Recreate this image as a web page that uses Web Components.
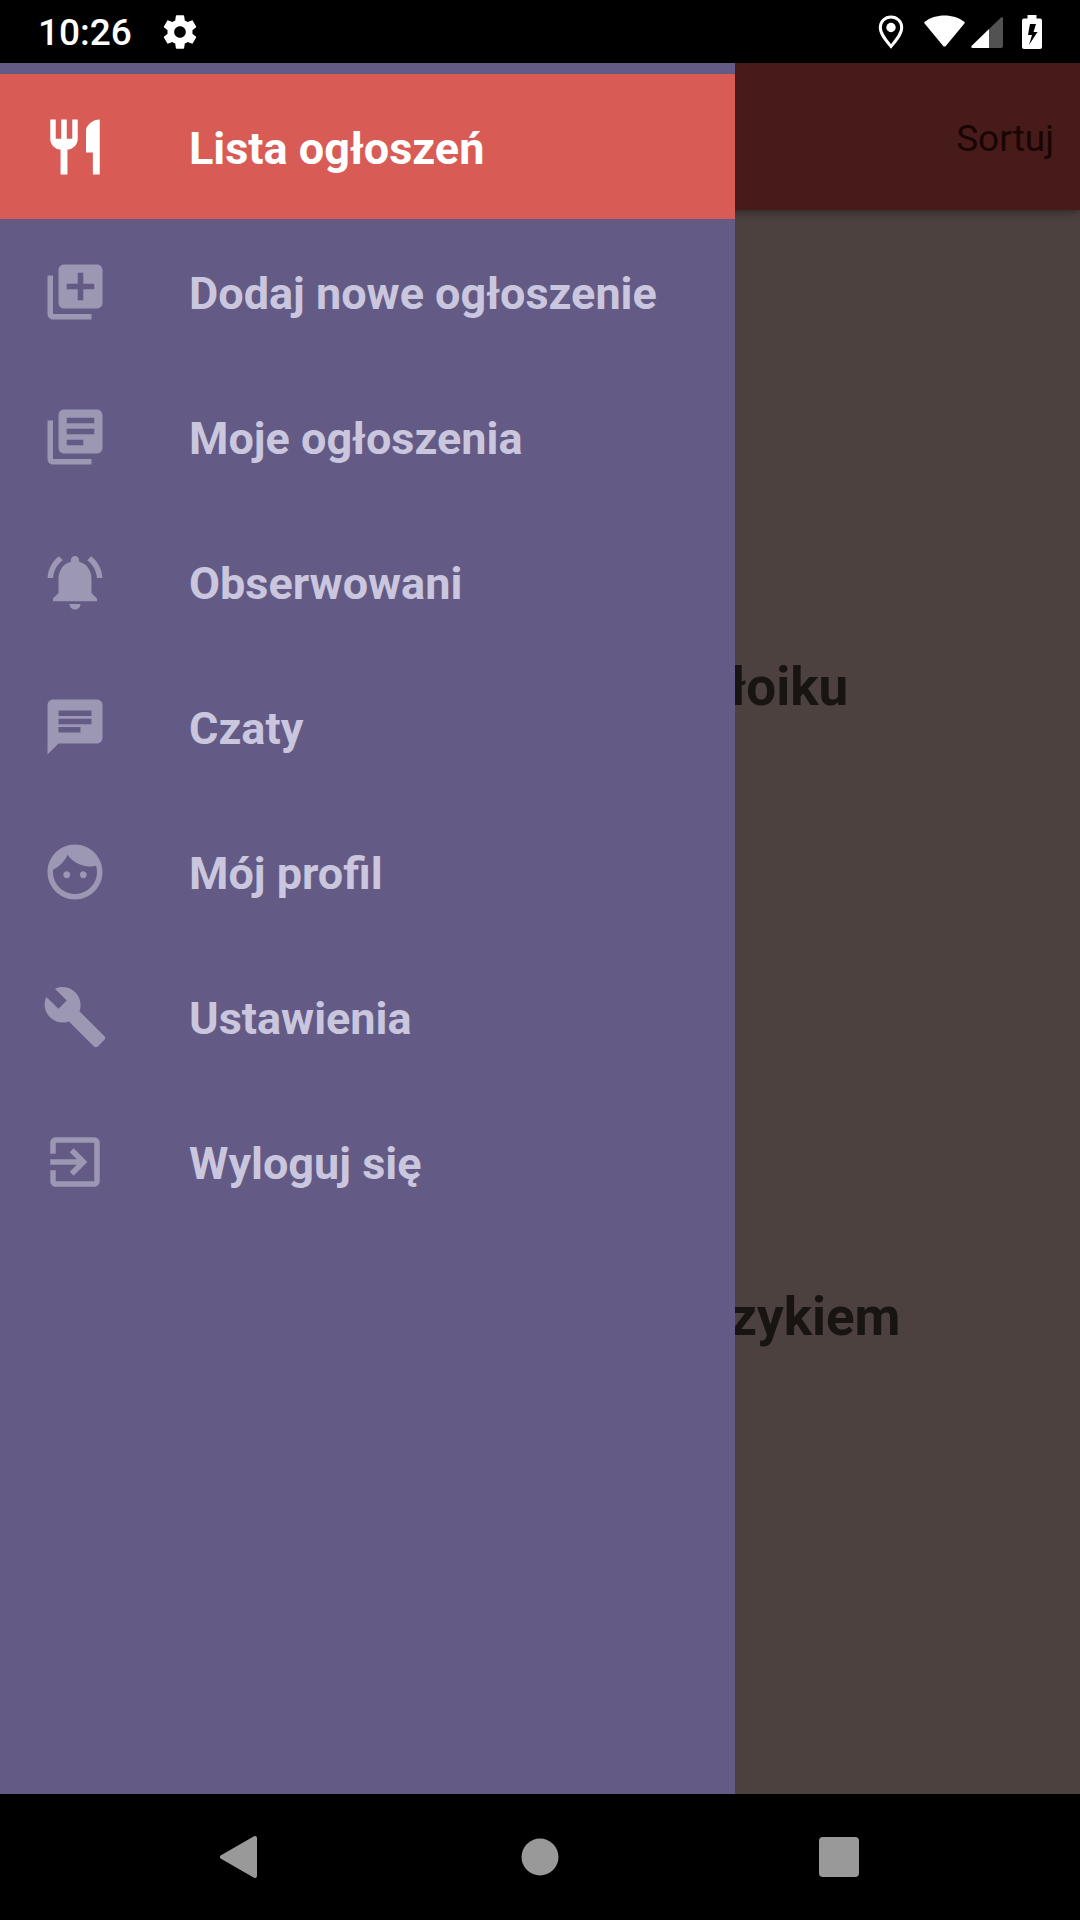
<!DOCTYPE html>
<html lang="pl">
<head>
<meta charset="utf-8">
<meta name="viewport" content="width=device-width, initial-scale=1">
<title>Lista ogłoszeń</title>
<style>
  html, body { height: 100%; margin: 0; }
  body { font-family: Roboto, "Liberation Sans", sans-serif; background: #000; }
</style>
</head>
<body>
<app-screen>
  <status-bar slot="status">10:26</status-bar>
  <listing-page slot="page">
    <listing-title>łoiku</listing-title>
    <listing-title>zykiem</listing-title>
  </listing-page>
  <nav-drawer slot="drawer">
    <drawer-item icon="restaurant" active>Lista ogłoszeń</drawer-item>
    <drawer-item icon="add">Dodaj nowe ogłoszenie</drawer-item>
    <drawer-item icon="library">Moje ogłoszenia</drawer-item>
    <drawer-item icon="bell">Obserwowani</drawer-item>
    <drawer-item icon="chat">Czaty</drawer-item>
    <drawer-item icon="face">Mój profil</drawer-item>
    <drawer-item icon="build">Ustawienia</drawer-item>
    <drawer-item icon="exit">Wyloguj się</drawer-item>
  </nav-drawer>
  <system-nav slot="nav"></system-nav>
</app-screen>
<script>
const ICONS = {
  restaurant: 'M11 9H9V2H7v7H5V2H3v7c0 2.12 1.66 3.84 3.75 3.97V22h2.5v-9.03C11.34 12.84 13 11.12 13 9V2h-2v7zm5-3v8h2.5v8H21V2c-2.76 0-5 2.24-5 4z',
  add: 'M4 6H2v14c0 1.1.9 2 2 2h14v-2H4V6zm16-4H8c-1.1 0-2 .9-2 2v12c0 1.1.9 2 2 2h12c1.1 0 2-.9 2-2V4c0-1.1-.9-2-2-2zm-1 9h-4v4h-2v-4H9V9h4V5h2v4h4v2z',
  library: 'M4 6H2v14c0 1.1.9 2 2 2h14v-2H4V6zm16-4H8c-1.1 0-2 .9-2 2v12c0 1.1.9 2 2 2h12c1.1 0 2-.9 2-2V4c0-1.1-.9-2-2-2zm-1 9H9V9h10v2zm-4 4H9v-2h6v2zm4-8H9V5h10v2z',
  bell: 'M7.58 4.08L6.15 2.65C3.75 4.48 2.17 7.3 2.03 10.5h2c.15-2.65 1.51-4.97 3.55-6.42zm12.39 6.42h2c-.15-3.2-1.73-6.02-4.12-7.85l-1.42 1.43c2.02 1.45 3.39 3.77 3.54 6.42zM18 11c0-3.07-1.64-5.64-4.5-6.32V4c0-.83-.67-1.5-1.5-1.5s-1.5.67-1.5 1.5v.68C7.63 5.36 6 7.92 6 11v5l-2 2v1h16v-1l-2-2v-5zm-6 11c.14 0 .27-.01.4-.04.65-.14 1.18-.58 1.44-1.18.1-.24.15-.5.15-.78h-4c.01 1.1.9 2 2.01 2z',
  chat: 'M20 2H4c-1.1 0-1.99.9-1.99 2L2 22l4-4h14c1.1 0 2-.9 2-2V4c0-1.1-.9-2-2-2zM6 9h12v2H6V9zm8 5H6v-2h8v2zm4-6H6V6h12v2z',
  face: 'M9 11.75c-.69 0-1.25.56-1.25 1.25s.56 1.25 1.25 1.25 1.25-.56 1.25-1.25-.56-1.25-1.25-1.25zm6 0c-.69 0-1.25.56-1.25 1.25s.56 1.25 1.25 1.25 1.25-.56 1.25-1.25-.56-1.25-1.25-1.25zM12 2C6.48 2 2 6.48 2 12s4.48 10 10 10 10-4.48 10-10S17.52 2 12 2zm0 18c-4.41 0-8-3.59-8-8 0-.29.02-.58.05-.86 2.36-1.05 4.23-2.98 5.21-5.37C11.07 8.33 14.05 10 17.42 10c.78 0 1.53-.09 2.25-.26.21.71.33 1.47.33 2.26 0 4.41-3.59 8-8 8z',
  build: 'M22.7 19l-9.1-9.1c.9-2.3.4-5-1.5-6.9-2-2-5-2.4-7.4-1.3L9 6 6 9 1.6 4.7C.4 7.1.9 10.1 2.9 12.1c1.9 1.9 4.6 2.4 6.9 1.5l9.1 9.1c.4.4 1 .4 1.4 0l2.3-2.3c.5-.4.5-1.1.1-1.4z',
  exit: 'M10.09 15.59L11.5 17l5-5-5-5-1.41 1.41L12.67 11H3v2h9.67l-2.58 2.59zM19 3H5c-1.11 0-2 .9-2 2v4h2V5h14v14H5v-4H3v4c0 1.1.89 2 2 2h14c1.1 0 2-.9 2-2V5c0-1.1-.9-2-2-2z'
};
// Registers an element whose shadow root holds the given markup.
function define(name, markup) {
  customElements.define(name, class extends HTMLElement {
    constructor() {
      super();
      this.attachShadow({ mode: 'open' }).innerHTML = typeof markup === 'function' ? markup(this) : markup;
    }
  });
}

define('app-screen', `
  <style>
    :host { display: flex; flex-direction: column; min-height: 100vh; }
    main { flex: 1; display: grid; grid-template-columns: minmax(0, 735px) 1fr; overflow: hidden; }
    ::slotted([slot=page]) { grid-area: 1 / 1 / 2 / 3; }
    ::slotted([slot=drawer]) { grid-area: 1 / 1 / 2 / 2; z-index: 1; }
  </style>
  <slot name="status"></slot>
  <main><slot name="page"></slot><slot name="drawer"></slot></main>
  <slot name="nav"></slot>`);

define('status-bar', `
  <style>
    :host { display: flex; align-items: center; justify-content: space-between; height: 63px;
      padding: 0 38px; background: #000; color: #fff; font-size: 37px; line-height: 44px; font-weight: 500; }
    div { display: flex; align-items: center; }
    .left { gap: 28px; }
    time { padding-top: 3px; }
    svg { display: block; fill: #fff; }
    .pin { margin-right: 20px; } .wifi { margin-right: 6px; } .signal { margin-right: 19px; }
  </style>
  <div class="left"><time><slot></slot></time>
    <svg width="40" height="40" viewBox="0 0 24 24"><path d="M19.43 12.98c.04-.32.07-.64.07-.98s-.03-.66-.07-.98l2.11-1.65c.19-.15.24-.42.12-.64l-2-3.46c-.12-.22-.39-.3-.61-.22l-2.49 1c-.52-.4-1.08-.73-1.69-.98l-.38-2.65C14.46 2.18 14.25 2 14 2h-4c-.25 0-.46.18-.49.42l-.38 2.65c-.61.25-1.17.59-1.69.98l-2.49-1c-.23-.09-.49 0-.61.22l-2 3.46c-.13.22-.07.49.12.64l2.11 1.65c-.04.32-.07.65-.07.98s.03.66.07.98l-2.11 1.65c-.19.15-.24.42-.12.64l2 3.46c.12.22.39.3.61.22l2.49-1c.52.4 1.08.73 1.69.98l.38 2.65c.03.24.24.42.49.42h4c.25 0 .46-.18.49-.42l.38-2.65c.61-.25 1.17-.59 1.69-.98l2.49 1c.23.09.49 0 .61-.22l2-3.46c.12-.22.07-.49-.12-.64l-2.11-1.65zM12 15.5c-1.93 0-3.5-1.57-3.5-3.5s1.57-3.5 3.5-3.5 3.5 1.57 3.5 3.5-1.57 3.5-3.5 3.5z"/></svg>
  </div>
  <div class="right">
    <svg class="pin" width="26" height="34" viewBox="0 0 26 34"><path d="M13 2C7 2 2.300 6.500 2.300 12.500 2.300 19 8 25.500 13 31.500 18 25.500 23.700 19 23.700 12.500 23.700 6.500 19 2 13 2z" fill="none" stroke="#fff" stroke-width="3"/><circle cx="13" cy="12.500" r="4.700"/></svg>
    <svg class="wifi" width="41" height="34" viewBox="0 0 41 34"><path d="M.7 6.800C6 2.500 13 .4 20.500.4S35 2.500 40.300 6.800q.8.700.1 1.600L22 30.700q-1.500 1.700-3 0L.6 8.400q-.7-.9.100-1.600z"/></svg>
    <svg class="signal" width="32" height="34" viewBox="0 0 32 34"><path d="M30 2.500q2-1.500 2 1V31q0 2-2 2H18V14z" fill="#525252"/><path d="M18 14v19H2q-3 0-1-2.500z"/></svg>
    <svg class="battery" width="20" height="34" viewBox="0 0 20 34"><path fill-rule="evenodd" d="M5.500 0h9v3.500H18q2 0 2 2V32q0 2-2 2H2q-2 0-2-2V5.500q0-2 2-2h3.500zM8 9L6 20h4L7 30l8.500-13h-4L14 9z"/></svg>
  </div>`);

define('listing-page', `
  <style>
    :host { display: flex; flex-direction: column; background: #4d4140; min-width: 0; }
    header { display: flex; align-items: center; justify-content: flex-end; height: 147px; padding: 4px 26px 0;
      box-sizing: border-box; background: #471b19; box-shadow: 0 2px 8px rgba(0,0,0,.4); }
    button { border: 0; padding: 0; background: none; color: #190504; font: 400 37px/44px Roboto, sans-serif; }
    section { display: flex; flex-direction: column; gap: 566px; padding: 445px 0 0 730px; }
  </style>
  <header><button type="button">Sortuj</button></header>
  <section><slot></slot></section>`);

define('listing-title', `
  <style>
    :host { display: block; }
    h2 { margin: 0; font-size: 53px; line-height: 64px; font-weight: 700; color: #171412; }
  </style>
  <h2><slot></slot></h2>`);

define('nav-drawer', `
  <style>
    :host { display: block; background: #635b85; padding-top: 11px; }
    nav { display: flex; flex-direction: column; }
  </style>
  <nav aria-label="Menu"><slot></slot></nav>`);

define('drawer-item', el => `
  <style>
    :host { display: block; --label: #cac6de; --icon: #9c97b2; }
    :host([active]) { background: #d85b56; --label: #fff; --icon: #fff; }
    a { display: flex; align-items: center; gap: 81px; height: 145px; padding: 0 42px; box-sizing: border-box;
      color: var(--label); font-size: 45px; line-height: 52px; font-weight: 700; text-decoration: none; white-space: nowrap; }
    svg { flex: none; fill: var(--icon); }
    span { padding-top: 4px; }
  </style>
  <a href="#${el.getAttribute('icon')}"><svg width="66" height="66" viewBox="0 0 24 24" aria-hidden="true"><path d="${ICONS[el.getAttribute('icon')]}"/></svg><span><slot></slot></span></a>`);

define('system-nav', `
  <style>
    :host { display: grid; grid-template-columns: repeat(3, 1fr); height: 126px; padding: 0 92px; background: #000; }
    button { display: flex; align-items: center; justify-content: center; border: 0; padding: 0; background: none; }
    svg { fill: #999; stroke: #999; }
  </style>
  <button type="button" aria-label="Wstecz"><svg width="44" height="44" viewBox="0 0 44 44"><path d="M36 3v38L3 22z" stroke-width="4" stroke-linejoin="round"/></svg></button>
  <button type="button" aria-label="Ekran główny"><svg width="44" height="44" viewBox="0 0 44 44"><circle cx="22" cy="22" r="18.500" stroke="none"/></svg></button>
  <button type="button" aria-label="Ostatnie"><svg width="44" height="44" viewBox="0 0 44 44"><rect x="2" y="2" width="40" height="40" rx="4" stroke="none"/></svg></button>`);
</script>
</body>
</html>
